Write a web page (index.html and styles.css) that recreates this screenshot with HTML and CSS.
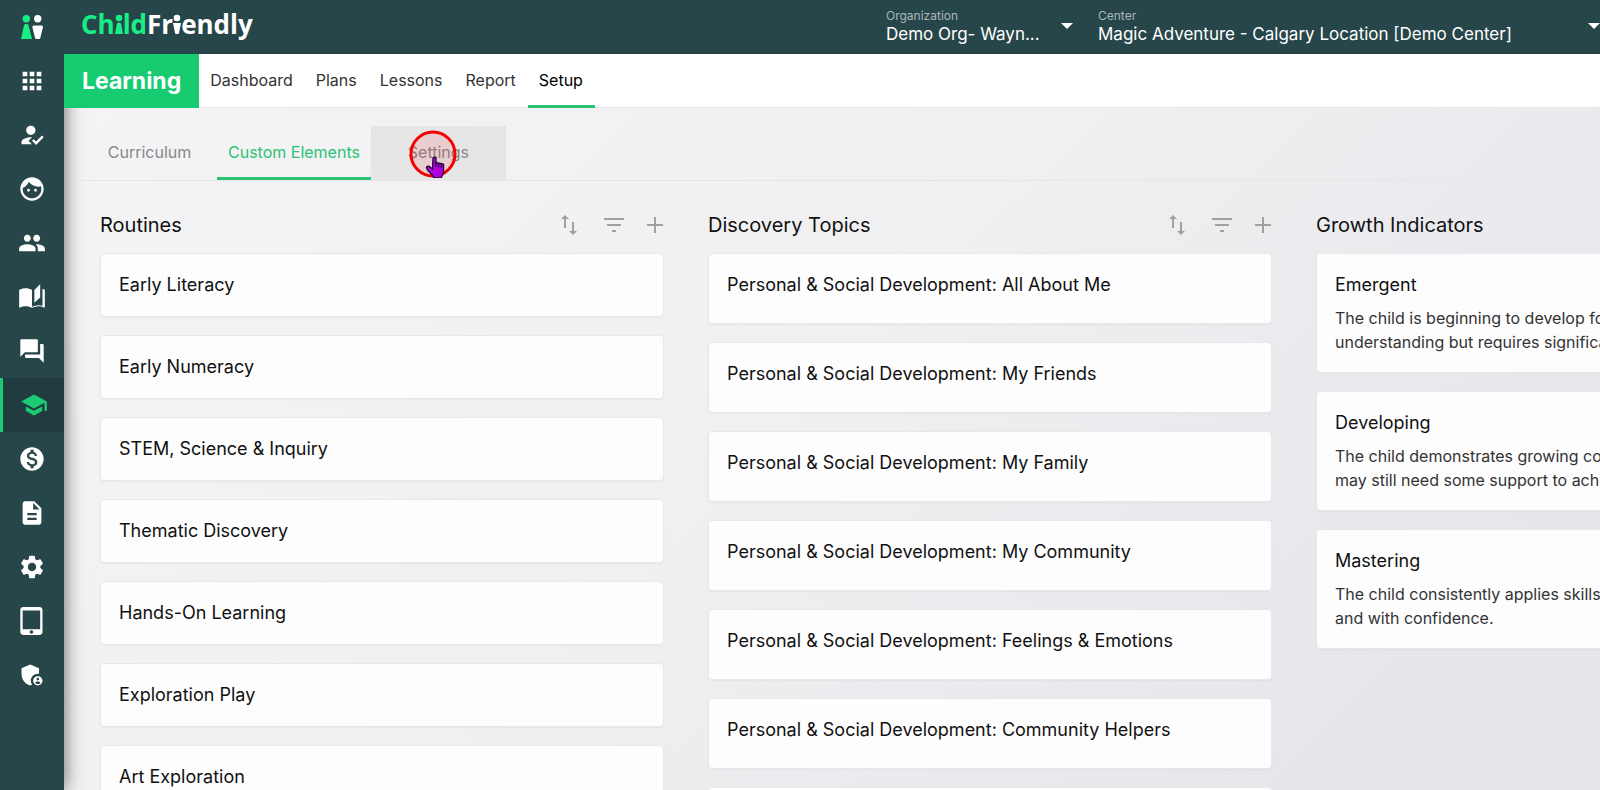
FILE: index.html
```html
<!DOCTYPE html>
<html lang="en">
<head>
	<meta charset="utf-8">
	<title>ChildFriendly - Learning Setup</title>
	<link rel="stylesheet" href="styles.css">
</head>
<body>
	<aside class="sidebar">
		<a href="#" class="side-item" aria-label="Home">
			<svg class="brand-icon" viewBox="0 0 22 24"><g fill="#17ef86"><circle cx="5.3" cy="3.8" r="3.7"/><path d="M3 10.4q0-1.400 2.300-1.400t2.300 1.400L11 24H0z"/></g><g fill="#fff"><circle cx="16.700" cy="3.800" r="3.700"/><path d="M11.300 12q0-1.500 1.500-1.500h7.700q1.500 0 1.500 1.500L19.300 23q-.3 1-1.200 1h-2.800q-.9 0-1.200-1z"/></g></svg>
		</a>
		<a href="#" class="side-item" aria-label="Apps">
			<svg viewBox="0 0 24 24"><path d="M4 8h4V4H4v4zm6 12h4v-4h-4v4zm-6 0h4v-4H4v4zm0-6h4v-4H4v4zm6 0h4v-4h-4v4zm6-10v4h4V4h-4zm-6 4h4V4h-4v4zm6 6h4v-4h-4v4zm0 6h4v-4h-4v4z"/></svg>
		</a>
		<a href="#" class="side-item" aria-label="Attendance">
			<svg viewBox="0 0 24 24"><path d="M9 17l3-2.940c-.39-.04-.68-.06-1-.06-2.670 0-8 1.340-8 4v2h9l-3-3zm2-5c2.210 0 4-1.790 4-4s-1.790-4-4-4-4 1.790-4 4 1.790 4 4 4zM15.470 20.500L12 17l1.400-1.410 2.070 2.080 5.130-5.170 1.400 1.410z"/></svg>
		</a>
		<a href="#" class="side-item" aria-label="Children">
			<svg viewBox="0 0 24 24"><path d="M9 11.750c-.69 0-1.250.56-1.250 1.250s.56 1.250 1.250 1.250 1.250-.56 1.250-1.250-.56-1.250-1.250-1.250zm6 0c-.69 0-1.250.56-1.250 1.250s.56 1.250 1.250 1.250 1.250-.56 1.250-1.250-.56-1.250-1.250-1.250zM12 2C6.480 2 2 6.480 2 12s4.480 10 10 10 10-4.480 10-10S17.520 2 12 2zm0 18c-4.410 0-8-3.590-8-8 0-.29.02-.58.05-.86 2.360-1.050 4.230-2.980 5.210-5.370C11.070 8.330 14.050 10 17.420 10c.78 0 1.530-.09 2.250-.26.21.71.33 1.470.33 2.260 0 4.410-3.590 8-8 8z"/></svg>
		</a>
		<a href="#" class="side-item" aria-label="People">
			<svg viewBox="0 0 24 24"><path d="M16 11c1.660 0 2.990-1.340 2.990-3S17.660 5 16 5c-1.660 0-3 1.340-3 3s1.340 3 3 3zm-8 0c1.660 0 2.990-1.340 2.990-3S9.660 5 8 5C6.340 5 5 6.340 5 8s1.340 3 3 3zm0 2c-2.330 0-7 1.170-7 3.500V19h14v-2.500c0-2.330-4.670-3.500-7-3.500zm8 0c-.29 0-.62.02-.97.05 1.160.84 1.970 1.970 1.970 3.450V19h6v-2.500c0-2.330-4.670-3.500-7-3.500z"/></svg>
		</a>
		<a href="#" class="side-item" aria-label="Stories">
			<svg viewBox="0 0 24 24"><path d="M19 1l-5 5v11l5-4.500V1zM21 5v14.500c-1.100-.35-2.300-.5-3.500-.5-1.700 0-4.150.65-5.500 1.500V6c-1.450-1.100-3.550-1.500-5.500-1.500S2.450 4.900 1 6v14.650c0 .25.25.5.5.5.1 0 .15-.05.25-.05C3.100 20.450 5.050 20 6.500 20c1.950 0 4.050.4 5.500 1.500 1.350-.85 3.800-1.500 5.500-1.500 1.650 0 3.350.3 4.750 1.050.1.05.15.05.25.05.25 0 .5-.25.5-.5V6c-.6-.45-1.250-.75-2-1z"/></svg>
		</a>
		<a href="#" class="side-item" aria-label="Messages">
			<svg viewBox="0 0 24 24"><path d="M21 6h-2v9H6v2c0 .55.45 1 1 1h11l4 4V7c0-.55-.45-1-1-1zm-4 6V3c0-.55-.45-1-1-1H3c-.55 0-1 .45-1 1v14l4-4h10c.55 0 1-.45 1-1z"/></svg>
		</a>
		<a href="#" class="side-item active" aria-label="Learning">
			<svg viewBox="0 0 24 24"><path d="M5 13.180v4L12 21l7-3.820v-4L12 17l-7-3.820zM12 3L1 9l11 6 9-4.910V17h2V9L12 3z"/></svg>
		</a>
		<a href="#" class="side-item" aria-label="Billing">
			<svg viewBox="0 0 24 24"><path d="M12 2C6.480 2 2 6.480 2 12s4.480 10 10 10 10-4.480 10-10S17.520 2 12 2zm1.410 16.090V20h-2.670v-1.930c-1.710-.36-3.160-1.460-3.270-3.400h1.960c.1 1.050.82 1.870 2.650 1.870 1.960 0 2.400-.98 2.400-1.590 0-.83-.44-1.610-2.670-2.140-2.480-.6-4.180-1.620-4.180-3.670 0-1.720 1.390-2.840 3.110-3.210V4h2.670v1.950c1.860.45 2.790 1.860 2.850 3.390H14.300c-.05-1.110-.64-1.870-2.220-1.870-1.500 0-2.400.68-2.400 1.640 0 .84.65 1.390 2.670 1.910s4.180 1.390 4.180 3.910c-.01 1.830-1.380 2.830-3.120 3.160z"/></svg>
		</a>
		<a href="#" class="side-item" aria-label="Documents">
			<svg viewBox="0 0 24 24"><path d="M14 2H6c-1.100 0-1.990.9-1.990 2L4 20c0 1.100.89 2 1.990 2H18c1.100 0 2-.9 2-2V8l-6-6zm2 16H8v-2h8v2zm0-4H8v-2h8v2zm-3-5V3.500L18.500 9H13z"/></svg>
		</a>
		<a href="#" class="side-item" aria-label="Settings">
			<svg viewBox="0 0 24 24"><path d="M19.140 12.940c.04-.3.06-.61.06-.94 0-.32-.02-.64-.07-.94l2.030-1.580c.18-.14.23-.41.12-.61l-1.920-3.320c-.12-.22-.37-.29-.59-.22l-2.390.96c-.5-.38-1.030-.7-1.620-.94l-.36-2.540c-.04-.24-.24-.41-.48-.41h-3.840c-.24 0-.43.17-.47.41l-.36 2.540c-.59.24-1.130.57-1.620.94l-2.390-.96c-.22-.08-.47 0-.59.22L2.740 8.870c-.12.21-.08.47.12.61l2.030 1.580c-.05.3-.09.63-.09.94s.02.64.07.94l-2.030 1.580c-.18.14-.23.41-.12.61l1.920 3.320c.12.22.37.29.59.22l2.390-.96c.5.38 1.030.7 1.620.94l.36 2.540c.05.24.24.41.48.41h3.840c.24 0 .44-.17.47-.41l.36-2.540c.59-.24 1.130-.56 1.620-.94l2.390.96c.22.08.47 0 .59-.22l1.920-3.320c.12-.22.07-.47-.12-.61l-2.010-1.580zM12 15.600c-1.980 0-3.600-1.620-3.600-3.600s1.620-3.600 3.600-3.600 3.600 1.620 3.600 3.600-1.620 3.600-3.600 3.600z"/></svg>
		</a>
		<a href="#" class="side-item" aria-label="Devices">
			<svg viewBox="0 0 24 24"><path d="M18.500 0h-14C3.120 0 2 1.120 2 2.500v19C2 22.880 3.120 24 4.500 24h14c1.380 0 2.500-1.120 2.500-2.500v-19C21 1.120 19.880 0 18.500 0zm-7 23c-.83 0-1.500-.67-1.500-1.500s.67-1.500 1.500-1.500 1.500.67 1.500 1.500-.67 1.500-1.500 1.500zm7.500-4H4V3h15v16z"/></svg>
		</a>
		<a href="#" class="side-item" aria-label="Admin">
			<svg viewBox="0 0 24 24"><path d="M17 11c.34 0 .67.04 1 .09V6.270L10.500 3 3 6.270v4.910c0 4.540 3.200 8.790 7.500 9.820.55-.13 1.080-.32 1.600-.55-.69-.98-1.100-2.170-1.100-3.450 0-3.310 2.690-6 6-6zM17 13c-2.210 0-4 1.790-4 4s1.790 4 4 4 4-1.790 4-4-1.790-4-4-4zm0 1.380c.62 0 1.120.51 1.120 1.120s-.51 1.120-1.120 1.120-1.120-.51-1.120-1.120.5-1.120 1.120-1.120zm0 5.370c-.93 0-1.740-.46-2.240-1.170.05-.72 1.510-1.080 2.240-1.080s2.190.36 2.240 1.080c-.5.71-1.310 1.170-2.240 1.170z"/></svg>
		</a>
	</aside>

	<div class="page">
		<header class="topbar">
			<a href="#" class="logo" aria-label="ChildFriendly"><span class="green">Ch<svg viewBox="0 0 8 20"><circle cx="4" cy="4" r="3.300"/><path d="M2 9.500q2-2 4 0L8 20H0z"/></svg>ld</span>Fr<svg viewBox="0 0 8 20"><circle cx="4" cy="4" r="3.300"/><path d="M0 9h8L6 19q-.2 1-1 1H3q-.8 0-1-1z"/></svg>endly</a>
			<div class="picker organization">
				<div class="field">
					<label for="organization">Organization</label>
					<select id="organization"><option>Demo Org- Wayn...</option></select>
				</div>
				<span class="caret"></span>
			</div>
			<div class="picker center">
				<div class="field">
					<label for="center">Center</label>
					<select id="center"><option>Magic Adventure - Calgary Location [Demo Center]</option></select>
				</div>
				<span class="caret"></span>
			</div>
		</header>

		<nav class="menu">
			<h1>Learning</h1>
			<a href="#">Dashboard</a>
			<a href="#">Plans</a>
			<a href="#">Lessons</a>
			<a href="#">Report</a>
			<a href="#" class="active">Setup</a>
		</nav>

		<main class="content">
			<div class="tabs" role="tablist">
				<button role="tab">Curriculum</button>
				<button role="tab" class="active" aria-selected="true">Custom Elements</button>
				<button role="tab" class="hover">Settings
					<svg class="pointer" viewBox="0 0 48 48"><circle cx="24" cy="24" r="22" fill="#ff0000" fill-opacity=".1" stroke="#f40000" stroke-width="3"/><path d="M24 28q1.500-1.500 3 0v5q1.500-.8 2.500.3 1.500-.6 2.500.5 2-.4 2.600 1v7q-.6 3-2.600 6h-7q-2-3.500-5.500-6.500-3-3.500-1.500-4.800 1.500-1 3 .5l2.500 2z" fill="#b400dc" stroke="#1c0830" stroke-width="1.300"/><path d="M27 33v4M29.700 34v3.500M32.200 34.500V38" stroke="#1c0830"/></svg>
				</button>
			</div>

			<div class="board">
				<section class="column routines">
					<div class="column-head">
						<h2>Routines</h2>
						<button aria-label="Sort"><svg viewBox="0 0 24 24"><path d="M8 2L4 6h3v9h2V6h3zM16 22l4-4h-3V9h-2v9h-3z"/></svg></button>
						<button aria-label="Filter"><svg viewBox="0 0 24 24"><path d="M2 5h20v2H2zM5 11h14v2H5zM10 17h4v2h-4z"/></svg></button>
						<button aria-label="Add"><svg viewBox="0 0 24 24"><path d="M11 4h2v7h7v2h-7v7h-2v-7H4v-2h7z"/></svg></button>
					</div>
					<div class="card"><h3>Early Literacy</h3></div>
					<div class="card"><h3>Early Numeracy</h3></div>
					<div class="card"><h3>STEM, Science &amp; Inquiry</h3></div>
					<div class="card"><h3>Thematic Discovery</h3></div>
					<div class="card"><h3>Hands-On Learning</h3></div>
					<div class="card"><h3>Exploration Play</h3></div>
					<div class="card"><h3>Art Exploration</h3></div>
				</section>

				<section class="column topics">
					<div class="column-head">
						<h2>Discovery Topics</h2>
						<button aria-label="Sort"><svg viewBox="0 0 24 24"><path d="M8 2L4 6h3v9h2V6h3zM16 22l4-4h-3V9h-2v9h-3z"/></svg></button>
						<button aria-label="Filter"><svg viewBox="0 0 24 24"><path d="M2 5h20v2H2zM5 11h14v2H5zM10 17h4v2h-4z"/></svg></button>
						<button aria-label="Add"><svg viewBox="0 0 24 24"><path d="M11 4h2v7h7v2h-7v7h-2v-7H4v-2h7z"/></svg></button>
					</div>
					<div class="card"><h3>Personal &amp; Social Development: All About Me</h3></div>
					<div class="card"><h3>Personal &amp; Social Development: My Friends</h3></div>
					<div class="card"><h3>Personal &amp; Social Development: My Family</h3></div>
					<div class="card"><h3>Personal &amp; Social Development: My Community</h3></div>
					<div class="card"><h3>Personal &amp; Social Development: Feelings &amp; Emotions</h3></div>
					<div class="card"><h3>Personal &amp; Social Development: Community Helpers</h3></div>
					<div class="card"></div>
				</section>

				<section class="column growth">
					<div class="column-head">
						<h2>Growth Indicators</h2>
					</div>
					<div class="card">
						<h3>Emergent</h3>
						<p>The child is beginning to develop foundational<br>understanding but requires significant support.</p>
					</div>
					<div class="card">
						<h3>Developing</h3>
						<p>The child demonstrates growing competence but<br>may still need some support to achieve mastery.</p>
					</div>
					<div class="card">
						<h3>Mastering</h3>
						<p>The child consistently applies skills independently<br>and with confidence.</p>
					</div>
				</section>
			</div>
		</main>
	</div>
</body>
</html>
```
FILE: styles.css
```css
*{
	box-sizing: border-box;
}
body{
	margin: 0;
	height: 100vh;
	display: flex;
	overflow: hidden;
	font-family: Inter, "Liberation Sans", sans-serif;
	font-size: 16px;
	color: #111;
}
h1, h2, h3, p{
	margin: 0;
}
a{
	text-decoration: none;
}
button{
	border: 0;
	padding: 0;
	background: none;
	font: inherit;
}

/* Sidebar */
.sidebar{
	flex: none;
	width: 64px;
	background: #274649;
	box-shadow: 0 0 18px rgba(0,0,0,.6);
	z-index: 1;
}
.side-item{
	display: flex;
	align-items: center;
	justify-content: center;
	height: 54px;
}
.side-item svg{
	width: 28px;
	height: 28px;
	fill: #fff;
}
.side-item .brand-icon{
	width: 22px;
	height: 24px;
}
.side-item.active{
	border-left: 3px solid #1bcb73;
	background: #203c40;
}
.side-item.active svg{
	fill: #1bcb73;
}

.page{
	flex: 1;
	min-width: 0;
	display: flex;
	flex-direction: column;
}

/* Top bar */
.topbar{
	display: flex;
	align-items: center;
	height: 54px;
	padding: 0 0 2px 17px;
	background: #274649;
	color: #fff;
	z-index: 2;
}
.logo{
	margin-right: auto;
	padding-bottom: 4px;
	font: bold 26px/32px "Open Sans", "Noto Sans", sans-serif;
	color: #fff;
	fill: #fff;
}
.logo svg{
	width: 8px;
	height: 20px;
}
.logo .green{
	color: #17ef86;
	fill: #17ef86;
}
.picker{
	display: flex;
	align-items: center;
	gap: 12px;
}
.organization{
	width: 187px;
	margin-right: 25px;
}
.center{
	width: 502px;
}
.field{
	flex: 1;
	min-width: 0;
	display: flex;
	flex-direction: column;
}
.field label{
	font-size: 12px;
	line-height: 16px;
	color: #a9b8ba;
}
.field select{
	width: 100%;
	height: 20px;
	padding: 0;
	border: 0;
	appearance: none;
	background: none;
	font: inherit;
	font-size: 17px;
	line-height: 20px;
	color: #fff;
}
.caret{
	border: 6px solid transparent;
	border-top-color: #fff;
	border-bottom: 0;
}

/* Module menu */
.menu{
	display: flex;
	height: 54px;
	background: #fff;
	border-bottom: 1px solid #e6e6e8;
	line-height: 53px;
	z-index: 2;
}
.menu h1{
	height: 54px;
	padding: 0 18px;
	background: #17cb71;
	color: #fff;
	font-size: 23px;
	line-height: 54px;
}
.menu a{
	height: 54px;
	padding: 0 12px 0 11px;
	color: #333;
}
.menu a.active{
	color: #000;
	border-bottom: 3px solid #2bc275;
}

/* Tabs */
.content{
	flex: 1;
	min-height: 0;
	padding: 18px 0 0 18px;
	background: linear-gradient(135deg, #f4f3f5 0%, #f0f0f2 45%, #e6e7eb 85%);
}
.tabs{
	display: flex;
	height: 55px;
	border-bottom: 1px solid #e6e6e9;
}
.tabs button{
	position: relative;
	min-width: 135px;
	height: 54px;
	padding: 1px 11px 0;
	line-height: 50px;
	color: #888;
	border-bottom: 3px solid transparent;
}
.tabs button.active{
	color: #2bc275;
	border-bottom-color: #2bc275;
}
.tabs button.hover{
	background: #e6e6e7;
}
.pointer{
	position: absolute;
	left: 38px;
	top: 4px;
	width: 48px;
	height: 48px;
	fill: none;
}

/* Board */
.board{
	display: flex;
	gap: 44px;
	padding: 26px 18px 0;
}
.column{
	flex: none;
	width: 564px;
	display: flex;
	flex-direction: column;
	gap: 18px;
}
.column-head{
	display: flex;
	align-items: center;
	height: 36px;
	margin-bottom: -8px;
}
.column-head h2{
	margin-right: auto;
	font-size: 20px;
	font-weight: 400;
}
.column-head button{
	height: 24px;
	margin-left: 21px;
}
.column-head button:last-child{
	margin: 0 -3px 0 17px;
}
.column-head svg{
	display: block;
	width: 24px;
	height: 24px;
	fill: #a0a0a2;
}
.card{
	padding: 18px;
	border: 1px solid #e8e8eb;
	border-radius: 4px;
	background: #fdfdfe;
	box-shadow: 0 1px 2px rgba(0,0,0,.04);
}
.card h3{
	font-size: 18px;
	font-weight: 400;
	line-height: 26px;
}
.card p{
	margin-top: 8px;
	line-height: 24px;
	color: #333;
	white-space: nowrap;
}
.topics .card{
	min-height: 71px;
}
```
